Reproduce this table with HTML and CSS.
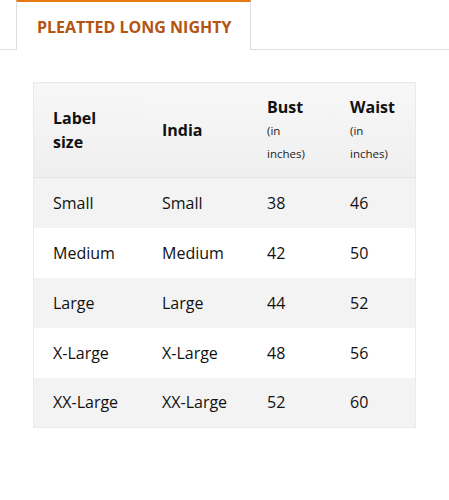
FILE: index.html
```html
<!DOCTYPE html>
<html>
<head>
<meta charset="utf-8">
<link rel="stylesheet" href="styles.css">
</head>
<body>
<div class="tabs">
  <div class="tab">PLEATTED LONG NIGHTY</div>
  <div class="tab-rest"></div>
</div>
<div class="content">
  <table class="chart">
    <thead>
      <tr>
        <th class="c1">Label<br>size</th>
        <th class="c2">India</th>
        <th class="c3">Bust<span class="unit">(in<br>inches)</span></th>
        <th class="c4">Waist<span class="unit">(in<br>inches)</span></th>
      </tr>
    </thead>
    <tbody>
      <tr><td>Small</td><td>Small</td><td>38</td><td>46</td></tr>
      <tr><td>Medium</td><td>Medium</td><td>42</td><td>50</td></tr>
      <tr><td>Large</td><td>Large</td><td>44</td><td>52</td></tr>
      <tr><td>X-Large</td><td>X-Large</td><td>48</td><td>56</td></tr>
      <tr><td>XX-Large</td><td>XX-Large</td><td>52</td><td>60</td></tr>
    </tbody>
  </table>
</div>
</body>
</html>
```

FILE: styles.css
```css
html, body {
  margin: 0;
  padding: 0;
  background: #fff;
}
body {
  font-family: "Open Sans", "Noto Sans", sans-serif;
  color: #111;
}
.tabs {
  position: relative;
  display: flex;
  padding-left: 16px;
  height: 50px;
}
.tabs::after {
  content: "";
  position: absolute;
  left: 0;
  width: 16px;
  bottom: 0;
  border-bottom: 1px solid #ddd;
}
.tab {
  width: 235px;
  box-sizing: border-box;
  border-top: 2px solid #e47911;
  border-left: 1px solid #ddd;
  border-right: 1px solid #ddd;
  padding: 14px 0 0 20px;
  font-weight: 700;
  font-size: 16px;
  color: #b55310;
  background: #fff;
}
.tab-rest {
  flex: 1;
  border-bottom: 1px solid #ddd;
}
.content {
  padding: 32px 0 0 33px;
}
.chart {
  width: 383px;
  border-collapse: collapse;
  border: 1px solid #eaeaea;
  font-size: 16px;
}
.chart th {
  text-align: left;
  vertical-align: middle;
  font-weight: 700;
  padding: 12px 10px 12px 19px;
  line-height: 24px;
  background: linear-gradient(#f7f7f7, #efefef);
  border-bottom: 1px solid #e4e4e4;
}
.chart th.c1 { width: 80px; }
.chart th.c2 { width: 76px; }
.chart th.c3 { width: 54px; }
.unit {
  display: block;
  font-weight: 400;
  font-size: 11.5px;
  line-height: 23px;
  color: #222;
}
.chart td {
  height: 50px;
  box-sizing: border-box;
  padding: 0 10px 0 19px;
  vertical-align: middle;
}
.chart tbody tr:nth-child(odd) td {
  background: #f3f3f3;
}
.chart tbody tr:nth-child(even) td {
  background: #fff;
}
```
